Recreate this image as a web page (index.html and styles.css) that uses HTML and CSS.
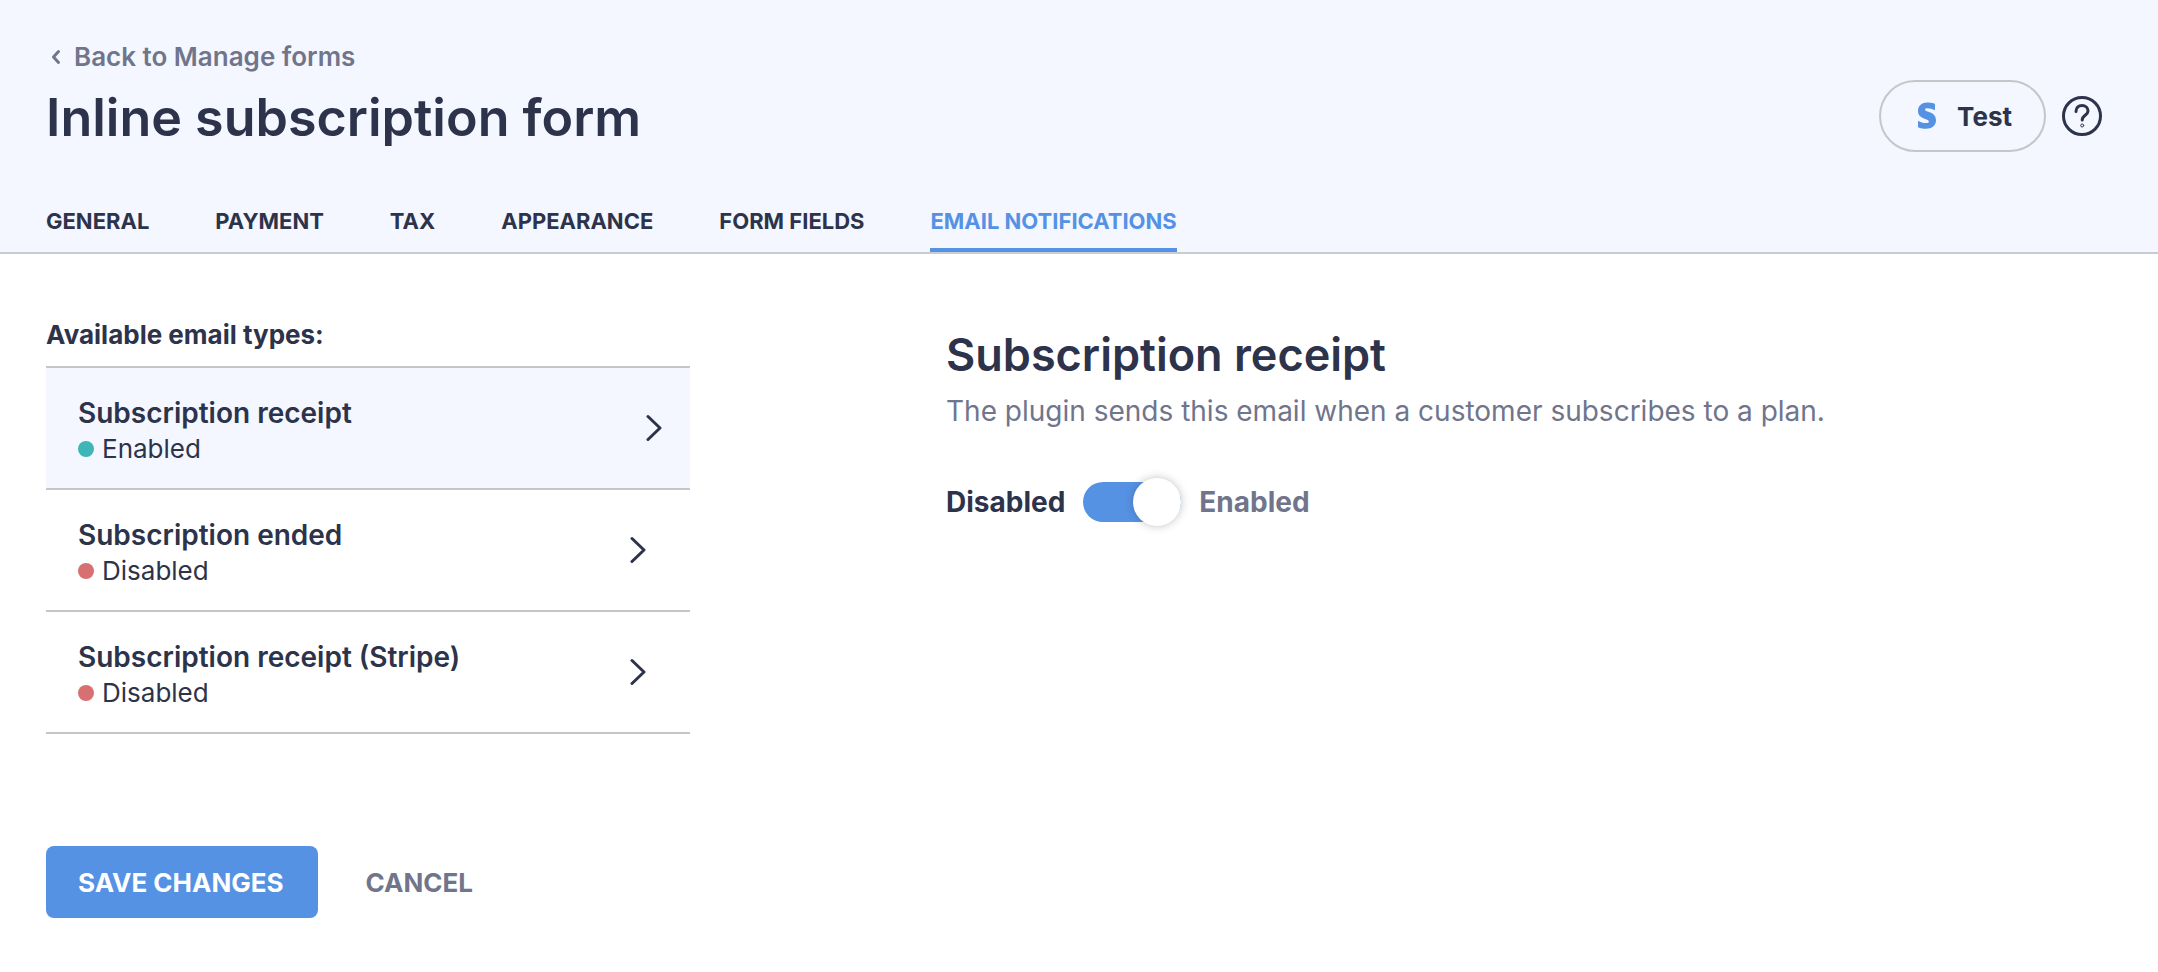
FILE: index.html
```html
<!DOCTYPE html>
<html lang="en">
<head>
<meta charset="utf-8">
<meta name="viewport" content="width=device-width, initial-scale=1">
<title>Inline subscription form</title>
<link rel="stylesheet" href="styles.css">
</head>
<body>
<header class="page-header">
  <div class="header-row">
    <div class="heading">
      <a class="back-link" href="#">
        <svg class="back-icon" viewBox="0 0 20 20" aria-hidden="true"><path d="M12.500 4.500L7.500 10L12.500 15.500"/></svg>
        Back to Manage forms
      </a>
      <h1 class="page-title">Inline subscription form</h1>
    </div>
    <div class="header-actions">
      <button class="mode-button" type="button">
        <svg class="mode-icon" viewBox="0 0 20 28" aria-hidden="true"><path d="M18 1.800V8.200C15.500 6.900 12.500 6.200 10.500 6.200C9 6.200 8 6.700 8 7.600C8 10.500 19 9.300 19 18.300C19 23.600 14.900 26.800 9 26.800C6.300 26.800 3.500 26.200 1 25.200V18.700C3.300 20 6.400 21.100 9 21.100C10.800 21.100 11.900 20.600 11.900 19.400C11.900 16.200 1 17.500 1 8.900C1 3.600 4.900 .500 10.500 .500C13 .500 15.500 .900 18 1.800Z"/></svg>
        Test
      </button>
      <button class="help-button" type="button" aria-label="Help">
        <svg class="help-icon" viewBox="0 0 40 40" aria-hidden="true"><circle cx="20" cy="20" r="18.500"/><path d="M14 15.500C14 11.700 16.400 9.500 20 9.500C23.600 9.500 26 11.700 26 15C26 19.300 20.200 19.300 20.200 24"/><circle class="help-dot" cx="20.200" cy="29.500" r="1.500"/></svg>
      </button>
    </div>
  </div>
  <nav class="tabs">
    <a class="tab" href="#">GENERAL</a>
    <a class="tab" href="#">PAYMENT</a>
    <a class="tab" href="#">TAX</a>
    <a class="tab" href="#">APPEARANCE</a>
    <a class="tab" href="#">FORM FIELDS</a>
    <a class="tab tab-active" href="#" aria-current="page">EMAIL NOTIFICATIONS</a>
  </nav>
</header>
<main class="content">
  <section class="types">
    <h2 class="types-label">Available email types:</h2>
    <ul class="type-list">
      <li><a class="type-item type-item-selected" href="#">
        <span class="type-text"><span class="type-name">Subscription receipt</span><span class="status status-on">Enabled</span></span>
        <svg class="chevron" viewBox="0 0 16 28" aria-hidden="true"><path d="M2 2.500L14 14L2 25.500"/></svg>
      </a></li>
      <li><a class="type-item" href="#">
        <span class="type-text"><span class="type-name">Subscription ended</span><span class="status">Disabled</span></span>
        <svg class="chevron" viewBox="0 0 16 28" aria-hidden="true"><path d="M2 2.500L14 14L2 25.500"/></svg>
      </a></li>
      <li><a class="type-item" href="#">
        <span class="type-text"><span class="type-name">Subscription receipt (Stripe)</span><span class="status">Disabled</span></span>
        <svg class="chevron" viewBox="0 0 16 28" aria-hidden="true"><path d="M2 2.500L14 14L2 25.500"/></svg>
      </a></li>
    </ul>
    <div class="form-actions">
      <button class="save-button" type="submit">SAVE CHANGES</button>
      <button class="cancel-button" type="button">CANCEL</button>
    </div>
  </section>
  <section class="details">
    <h2 class="details-title">Subscription receipt</h2>
    <p class="details-text">The plugin sends this email when a customer subscribes to a plan.</p>
    <label class="toggle">
      <span>Disabled</span>
      <input class="switch" type="checkbox" role="switch" checked>
      <span class="toggle-on">Enabled</span>
    </label>
  </section>
</main>
</body>
</html>
```
FILE: styles.css
```css
:root {
  --text: #2d334a;
  --muted: #70758c;
  --blue: #5592e4;
  --tint: #f4f7ff;
  --line: #c4c6ca;
}

* { box-sizing: border-box; }

body {
  margin: 0;
  background: #fff;
  color: var(--text);
  font-family: Inter, "Liberation Sans", sans-serif;
  font-size: 26px;
}

a { color: inherit; text-decoration: none; }
h1, h2, p, ul { margin: 0; padding: 0; }
ul { list-style: none; }

button {
  padding: 0;
  border: 0;
  background: none;
  color: inherit;
  font: inherit;
  font-weight: 700;
  cursor: pointer;
}

svg {
  flex: none;
  fill: none;
  stroke: currentColor;
  stroke-linecap: round;
  stroke-linejoin: round;
}

.page-header {
  padding: 36px 46px 0;
  border-bottom: 2px solid #caccd4;
  background: var(--tint);
}

.header-row {
  display: flex;
  align-items: flex-end;
  justify-content: space-between;
  gap: 32px;
}

.heading {
  display: flex;
  flex-direction: column;
  align-items: flex-start;
  gap: 4px;
}

.back-link {
  display: flex;
  align-items: center;
  gap: 8px;
  color: var(--muted);
  font-weight: 600;
  line-height: 42px;
}

.back-icon { width: 20px; height: 20px; stroke-width: 3; }

.page-title {
  font-size: 52px;
  font-weight: 600;
  line-height: 72px;
}

.header-actions {
  display: flex;
  align-items: center;
  gap: 16px;
  padding: 0 10px 2px 0;
}

.mode-button {
  display: flex;
  align-items: center;
  gap: 20px;
  height: 72px;
  padding: 0 32px 0 36px;
  border: 2px solid var(--line);
  border-radius: 36px;
}

.mode-icon { width: 20px; height: 28px; fill: var(--blue); stroke: none; }
.help-button { display: flex; }
.help-icon { width: 40px; height: 40px; stroke-width: 3; }
.help-dot { stroke-width: 1; }

.tabs {
  display: flex;
  gap: 66px;
  margin-top: 52px;
  font-size: 22px;
  font-weight: 700;
  line-height: 30px;
}

.tab { padding-bottom: 12px; border-bottom: 4px solid transparent; }
.tab-active { border-color: var(--blue); color: var(--blue); }

.content {
  display: flex;
  gap: 256px;
  padding: 66px 46px 48px;
}

.types { flex: 0 1 644px; }

.types-label {
  margin-bottom: 16px;
  font-size: 26px;
  font-weight: 700;
  line-height: 30px;
}

.type-list { border-top: 2px solid var(--line); }

.type-item {
  display: flex;
  align-items: center;
  justify-content: space-between;
  padding: 0 44px 0 32px;
  border-bottom: 2px solid var(--line);
}

.type-item-selected { padding-right: 28px; background: var(--tint); }

.type-text {
  display: flex;
  flex-direction: column;
  padding: 27px 0 21px;
  line-height: 36px;
}

.type-name { font-size: 28px; font-weight: 600; }
.status { display: flex; align-items: center; gap: 8px; }

.status::before {
  width: 16px;
  height: 16px;
  border-radius: 50%;
  background: #d86f70;
  content: "";
}

.status-on::before { background: #3db6b5; }
.chevron { width: 16px; height: 28px; stroke-width: 3; }

.form-actions {
  display: flex;
  gap: 48px;
  margin-top: 112px;
}

.save-button {
  height: 72px;
  padding: 0 34px 0 32px;
  border-radius: 8px;
  background: var(--blue);
  color: #fff;
}

.cancel-button { color: var(--muted); }

.details { flex: 1; padding-top: 5px; }

.details-title {
  font-size: 45px;
  font-weight: 600;
  line-height: 60px;
}

.details-text {
  margin-top: 6px;
  color: var(--muted);
  font-size: 28px;
  line-height: 40px;
}

.toggle {
  display: flex;
  align-items: center;
  gap: 18px;
  width: fit-content;
  margin-top: 47px;
  font-size: 28px;
  font-weight: 700;
  line-height: 48px;
}

.toggle-on { color: var(--muted); }

.switch {
  display: flex;
  align-items: center;
  width: 98px;
  height: 40px;
  margin: 0;
  border-radius: 20px;
  appearance: none;
  background: #c4c7ce;
}

.switch::before {
  flex: none;
  width: 48px;
  height: 48px;
  border-radius: 50%;
  background: #fff;
  box-shadow: 0 0 8px rgba(45, 51, 74, 0.3);
  content: "";
}

.switch:checked { justify-content: flex-end; background: var(--blue); }
```
